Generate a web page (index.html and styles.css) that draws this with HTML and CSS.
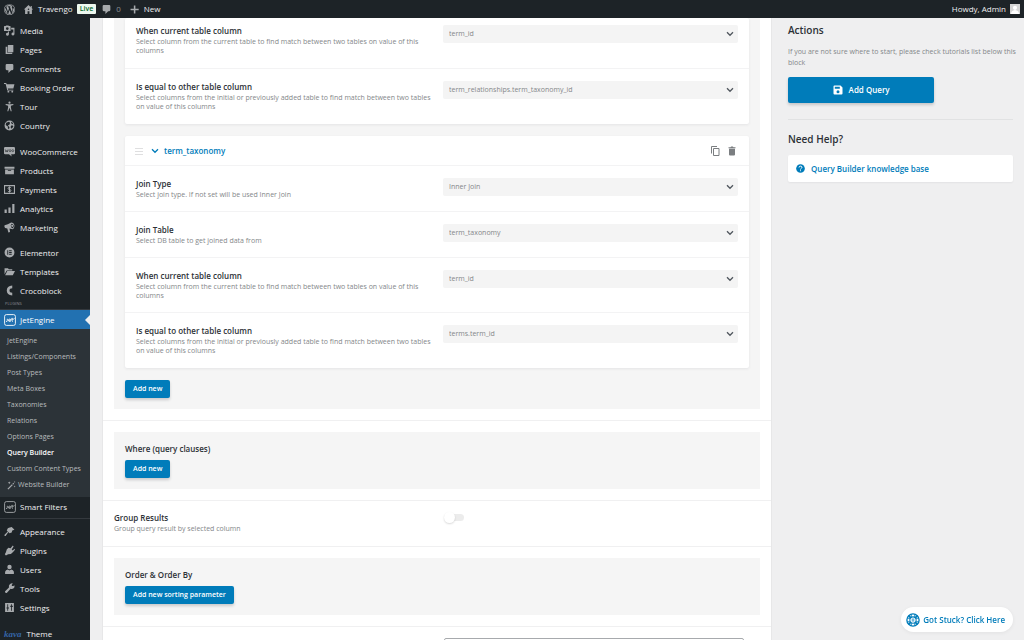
FILE: index.html
```html
<!DOCTYPE html>
<html lang="en">
<head>
<meta charset="utf-8">
<title>Query Builder</title>
<link rel="stylesheet" href="styles.css">
</head>
<body>
<svg class="sprite" aria-hidden="true">
  <symbol id="chevron" viewBox="0 0 10 10"><path d="M2 3.300 5 6.300 8 3.300" fill="none" stroke="currentColor" stroke-width="1.300"/></symbol>
  <symbol id="comment" viewBox="0 0 20 20"><path d="M5 2h10q2 0 2 2v7q0 2-2 2h-2l-5 5v-5H5q-2 0-2-2V4q0-2 2-2z"/></symbol>
  <symbol id="jet" viewBox="0 0 20 20"><rect x="1" y="1" width="18" height="18" rx="3" fill="none" stroke="currentColor" stroke-width="1.500"/><path d="M3.500 12.500q2 .5 2-1.500V8M7.500 10.500h4q0-2-2-2t-2 2 2 2h1.500M13.500 6.500v4.500q0 1.500 1.500 1.500M12 8.500h4.500l1-1" fill="none" stroke="currentColor" stroke-width="1.500"/></symbol>
</svg>
<header class="adminbar">
  <a class="bar-item" href="#" aria-label="About WordPress"><svg class="icon icon-bar" viewBox="0 0 20 20"><path fill-rule="evenodd" d="M10 0a10 10 0 1 1 0 20 10 10 0 0 1 0-20zm0 1a9 9 0 1 0 0 18 9 9 0 0 0 0-18z"/><path d="M2.700 6.700 6.700 17.500A8.200 8.200 0 0 1 2.700 6.700zM3.300 5.200A8.200 8.200 0 0 1 15.500 3.900c-1.200.2-1.700 1.300-1.200 2.400.8 1.500 1.500 2.500.8 4.700l-1 3.200-3.300-9.200 1-.2v-.6H6.500v.6l1.200.2 1.300 3.500-1.800 5.300L4.200 5l1-.2v-.6zM10.200 10.800l2.500 6.900q-2.500.9-5 .2zM17.200 6.200a8.200 8.200 0 0 1-3.100 10.900l2.500-7.200q.8-2 .6-3.700z"/></svg></a>
  <a class="bar-item" href="#"><svg class="icon icon-bar" viewBox="0 0 20 20"><path d="M10 2 1.500 10h2.300v8h4.500v-5h3.400v5h4.500v-8h2.300L16 7.600V3.500h-2v2.200zM10 8a1.400 1.400 0 1 1 0 2.800A1.400 1.400 0 0 1 10 8z"/></svg><span>Travengo</span><span class="live">Live</span></a>
  <a class="bar-item bar-count" href="#"><svg class="icon icon-bar"><use href="#comment"/></svg><span>0</span></a>
  <a class="bar-item" href="#"><svg class="icon icon-bar" viewBox="0 0 20 20"><path d="M8.800 2.500h2.800v6h6v2.800h-6v6H8.800v-6h-6V8.500h6z"/></svg><span>New</span></a>
  <a class="bar-item bar-user" href="#"><span>Howdy, Admin</span><svg class="avatar" viewBox="0 0 10 10"><rect width="10" height="10" fill="#d5d5d5"/><circle cx="5" cy="3.800" r="2.100" fill="#fff"/><path d="M1 10q0-3.500 4-4 4 .5 4 4z" fill="#fff"/></svg></a>
</header>
<div class="shell">
<nav class="sidebar" aria-label="Main menu">
  <ul class="menu">
    <li><a href="#"><svg class="icon" viewBox="0 0 20 20"><path fill-rule="evenodd" d="M3 2 4 1h4l1 1h2q1 0 1 1v7q0 1-1 1H1q-1 0-1-1V3q0-1 1-1zm3 2a2.500 2.500 0 1 0 0 5 2.500 2.500 0 0 0 0-5z"/><path d="M13 5h6v11.500a2.700 2.700 0 1 1-2-2.600V8h-4zM9 12v5a2.700 2.700 0 1 1-2-2.600V12z"/></svg>Media</a></li>
    <li><a href="#"><svg class="icon" viewBox="0 0 20 20"><path d="M7 2h10v13H7zM3 5h3v11h9v2H3z"/></svg>Pages</a></li>
    <li><a href="#"><svg class="icon"><use href="#comment"/></svg>Comments</a></li>
    <li><a href="#"><svg class="icon" viewBox="0 0 20 20"><path d="M0 2h4l1 2h14l-2 8H7l.4 2H17v1.500H6L3 3.800H0z"/><circle cx="8" cy="17.500" r="1.700"/><circle cx="15" cy="17.500" r="1.700"/></svg>Booking Order</a></li>
    <li><a href="#"><svg class="icon" viewBox="0 0 20 20"><circle cx="10" cy="3" r="2"/><path d="M3 5.500 8 6h4l5-.5v1.800L12.500 8.500V12L14 18.500h-1.800L10.500 13h-1l-1.700 5.500H6L7.500 12V8.500L3 7.300z"/></svg>Tour</a></li>
    <li><a href="#"><svg class="icon" viewBox="0 0 20 20"><path fill-rule="evenodd" d="M10 1a9 9 0 1 1 0 18 9 9 0 0 1 0-18zM4 5 3 9l4 3v3l2 2 1-4-3-3 3-2 1-3-2-2zm9-2 0 3 4 2-1-3zm0 7-1 3 2 3 3-4-1-2z"/></svg>Country</a></li>
  </ul>
  <ul class="menu menu-shop">
    <li><a href="#"><svg class="icon" viewBox="0 0 20 20"><path d="M2 2h16q2 0 2 2v9q0 2-2 2h-5l1 4-5-4H2q-2 0-2-2V4q0-2 2-2z"/><path d="m2 6 1.500 5L5 8l1 3 1.500-5" fill="none" stroke="#1d2327"/><circle cx="11" cy="8.500" r="1.800" fill="none" stroke="#1d2327"/><circle cx="16" cy="8.500" r="1.800" fill="none" stroke="#1d2327"/></svg>WooCommerce</a></li>
    <li><a href="#"><svg class="icon" viewBox="0 0 20 20"><path fill-rule="evenodd" d="M1 3h18v4H1zM2 8h16v9H2zm5 1.500V11h6V9.500z"/></svg>Products</a></li>
    <li><a href="#"><svg class="icon" viewBox="0 0 20 20"><path d="M1 3h18v14H1z" fill="none" stroke="currentColor" stroke-width="2"/><path d="M13 7.500q-.5-1.500-3-1.500T7.500 8t2.500 2 2.500 2T10 14t-3-1.500M10 4.500v11" fill="none" stroke="currentColor" stroke-width="1.800"/></svg>Payments</a></li>
    <li><a href="#"><svg class="icon" viewBox="0 0 20 20"><path d="M1 12h4v6H1zM8 8h4v10H8zM15 2h4v16h-4z"/></svg>Analytics</a></li>
    <li><a href="#"><svg class="icon" viewBox="0 0 20 20"><path fill-rule="evenodd" d="M1 6 7 4l6-3q5 0 6 6 0 5-3 6l-6-1 1 6-3 1-2-7-4-1q-2-2-1-5zm13-3q-3 2-1 6t4 1 0-5-3-2z"/><circle cx="15" cy="7" r="2"/></svg>Marketing</a></li>
  </ul>
  <ul class="menu menu-build">
    <li><a href="#"><svg class="icon" viewBox="0 0 20 20"><path fill-rule="evenodd" d="M10 1a9 9 0 1 1 0 18 9 9 0 0 1 0-18zM6 6v8h1.700V6zm3.300 0v1.700H14V6zm0 3.200v1.600H14V9.200zm0 3.100V14H14v-1.700z"/></svg>Elementor</a></li>
    <li><a href="#"><svg class="icon" viewBox="0 0 20 20"><path d="M1 15V4h6l2 2h6v2H5zM6 9h14l-4 8H2z"/></svg>Templates</a></li>
    <li><a href="#"><svg class="icon" viewBox="0 0 20 20"><path d="M15 1v5q-5 0-5 4t5 4v5q-10-1-10-9t10-9z"/></svg>Crocoblock</a></li>
  </ul>
  <div class="menu-label"><span>PLUGINS</span></div>
  <ul class="menu menu-jet">
    <li class="current"><a href="#"><svg class="icon icon-jet"><use href="#jet"/></svg>JetEngine</a>
      <ul class="submenu">
        <li><a href="#">JetEngine</a></li>
        <li><a href="#">Listings/Components</a></li>
        <li><a href="#">Post Types</a></li>
        <li><a href="#">Meta Boxes</a></li>
        <li><a href="#">Taxonomies</a></li>
        <li><a href="#">Relations</a></li>
        <li><a href="#">Options Pages</a></li>
        <li><a href="#" class="active" aria-current="page">Query Builder</a></li>
        <li><a href="#">Custom Content Types</a></li>
        <li><a href="#"><svg class="icon icon-wand" viewBox="0 0 20 20"><path d="m1 17 10-10 2 2L3 19zM12 6l2-2 2 2-2 2zM5 1l1 2 2 1-2 1-1 2-1-2-2-1 2-1zM17 10l.7 1.500 1.500.7-1.500.7-.7 1.500-.7-1.500-1.500-.7 1.500-.7zM17 0l.6 1.400L19 2l-1.400.6L17 4l-.6-1.400L15 2l1.400-.6z"/></svg>Website Builder</a></li>
      </ul>
    </li>
    <li><a href="#"><svg class="icon icon-jet"><use href="#jet"/></svg>Smart Filters</a></li>
  </ul>
  <ul class="menu menu-admin">
    <li><a href="#"><svg class="icon" viewBox="0 0 20 20"><path d="m9 3 5-1 5 5-4 1-1 4-4 1-2-2-5 7H1v-2l6-6-2-2 2-4z"/></svg>Appearance</a></li>
    <li><a href="#"><svg class="icon" viewBox="0 0 20 20"><path d="m12 6 4-5 1.500 1.500L14 8l2 2 3-3 1 1.500-3.500 4-4 4-5 .5-4 2-2-2 2-4L5 8l3-3z"/></svg>Plugins</a></li>
    <li><a href="#"><svg class="icon" viewBox="0 0 20 20"><circle cx="10" cy="5.500" r="4"/><path d="M2 18v-4q1-3 5-4l3 2 3-2q4 1 5 4v4z"/></svg>Users</a></li>
    <li><a href="#"><svg class="icon" viewBox="0 0 20 20"><path d="M17 5.500 19 4q1 4-2 6-2 1.500-5 .5L5 18q-2 1-3-1t1-3l6-6Q8 4 11 2t5-1l-2 2.500.5 2z"/></svg>Tools</a></li>
    <li><a href="#"><svg class="icon" viewBox="0 0 20 20"><path fill-rule="evenodd" d="M2 2h16v16H2zm4 2v6H4.500v2H6v4h1.500v-4H9v-2H7.500V4zm7 0v3h-1.500v2H13v7h1.500V9H16V7h-1.500V4z"/></svg>Settings</a></li>
  </ul>
  <ul class="menu menu-theme">
    <li><a href="#"><span class="kava" aria-hidden="true">kava</span>Theme</a></li>
  </ul>
</nav>
<main class="content">
  <div class="panel">
    <section class="section section-joins">
      <div class="box box-joins">
        <article class="card card-scrolled">
          <div class="field">
            <div class="field-text"><label class="title" for="a1">When current table column</label><p class="desc">Select column from the current table to find match between two tables on value of this columns</p></div>
            <div class="select"><select id="a1"><option>term_id</option></select><svg class="caret"><use href="#chevron"/></svg></div>
          </div>
          <div class="field">
            <div class="field-text"><label class="title" for="a2">Is equal to other table column</label><p class="desc">Select columns from the initial or previously added table to find match between two tables on value of this columns</p></div>
            <div class="select"><select id="a2"><option>term_relationships.term_taxonomy_id</option></select><svg class="caret"><use href="#chevron"/></svg></div>
          </div>
        </article>
        <article class="card">
          <header class="card-head">
            <svg class="grip" viewBox="0 0 8 8"><path d="M0 1.500h8M0 4.500h8M0 7.500h8" stroke="currentColor"/></svg>
            <button class="toggle" type="button"><svg class="caret-head"><use href="#chevron"/></svg>term_taxonomy</button>
            <button class="tool" type="button" aria-label="Copy"><svg viewBox="0 0 10 10"><path d="M1.500 7.500v-7H7M3.500 2.500h5.500v7H3.500z" fill="none" stroke="currentColor"/></svg></button>
            <button class="tool" type="button" aria-label="Delete"><svg viewBox="0 0 10 10"><path d="M1.500 1.200h2l.6-.7h1.800l.6.700h2v1h-7zM2 2.700h6v5.800q0 1-1 1H3q-1 0-1-1z" fill="currentColor"/></svg></button>
          </header>
          <div class="field">
            <div class="field-text"><label class="title" for="b1">Join Type</label><p class="desc">Select join type. If not set will be used Inner Join</p></div>
            <div class="select"><select id="b1"><option>Inner Join</option></select><svg class="caret"><use href="#chevron"/></svg></div>
          </div>
          <div class="field">
            <div class="field-text"><label class="title" for="b2">Join Table</label><p class="desc">Select DB table to get joined data from</p></div>
            <div class="select"><select id="b2"><option>term_taxonomy</option></select><svg class="caret"><use href="#chevron"/></svg></div>
          </div>
          <div class="field">
            <div class="field-text"><label class="title" for="b3">When current table column</label><p class="desc">Select column from the current table to find match between two tables on value of this columns</p></div>
            <div class="select"><select id="b3"><option>term_id</option></select><svg class="caret"><use href="#chevron"/></svg></div>
          </div>
          <div class="field">
            <div class="field-text"><label class="title" for="b4">Is equal to other table column</label><p class="desc">Select columns from the initial or previously added table to find match between two tables on value of this columns</p></div>
            <div class="select"><select id="b4"><option>terms.term_id</option></select><svg class="caret"><use href="#chevron"/></svg></div>
          </div>
        </article>
        <button class="btn" type="button">Add new</button>
      </div>
    </section>
    <section class="section">
      <div class="box"><h3 class="title box-title">Where (query clauses)</h3><button class="btn" type="button">Add new</button></div>
    </section>
    <section class="section setting">
      <div class="field-text"><label class="title" for="group">Group Results</label><p class="desc">Group query result by selected column</p></div>
      <div class="setting-control"><input class="switch" id="group" type="checkbox" role="switch"></div>
    </section>
    <section class="section">
      <div class="box"><h3 class="title box-title">Order &amp; Order By</h3><button class="btn" type="button">Add new sorting parameter</button></div>
    </section>
    <section class="section setting">
      <div class="field-text"></div>
      <div class="setting-control"><input class="text" type="text" aria-label="Limit"></div>
    </section>
  </div>
  <aside class="actions">
    <h2 class="heading">Actions</h2>
    <p class="note">If you are not sure where to start, please check tutorials list below this block</p>
    <button class="btn-primary" type="button"><svg class="save" viewBox="0 0 10 10"><path fill-rule="evenodd" d="M1.500.5h6l2 2v6q0 1-1 1h-7q-1 0-1-1v-7q0-1 1-1zM1.800 1.800v2h5v-2zM5 5.200a1.500 1.500 0 1 0 0 3 1.500 1.500 0 0 0 0-3z"/></svg>Add Query</button>
    <hr class="rule">
    <h2 class="heading">Need Help?</h2>
    <a class="help" href="#"><svg class="help-icon" viewBox="0 0 10 10"><circle cx="5" cy="5" r="4.800" fill="currentColor"/><path d="M3.400 3.900q0-1.500 1.600-1.500t1.600 1.300q0 .8-.8 1.200T5 6.100M5 7v1" fill="none" stroke="#fff" stroke-width="1.100"/></svg>Query Builder knowledge base</a>
  </aside>
</main>
</div>
<button class="stuck" type="button"><svg class="stuck-icon" viewBox="0 0 16 16"><circle cx="8" cy="8" r="7" fill="none" stroke="currentColor" stroke-width="1.500"/><circle cx="8" cy="8" r="3.600" fill="none" stroke="currentColor" stroke-width="1.200"/><path d="M6 1.500v3.200M10 1.500v3.200M6 11.300v3.200M10 11.300v3.200M1.500 6h3.200M1.500 10h3.200M11.300 6h3.200M11.300 10h3.200" stroke="currentColor"/><path d="M3 3l2.500 2.500M13 3l-2.500 2.500M3 13l2.500-2.500M13 13l-2.500-2.500" stroke="currentColor" stroke-width="2"/><path d="M6.500 7h3M6.500 9h3" stroke="currentColor"/></svg>Got Stuck? Click Here</button>
</body>
</html>
```
FILE: styles.css
```css
* { box-sizing: border-box; }
body {
  margin: 0;
  height: 100vh;
  display: flex;
  flex-direction: column;
  overflow: hidden;
  background: #efeff0;
  color: #2c3136;
  font: 8px/12px "Open Sans", "Noto Sans", sans-serif;
}
ul { list-style: none; margin: 0; padding: 0; }
p, h2, h3 { margin: 0; }
a { text-decoration: none; color: inherit; }
button, input, select { font: inherit; color: inherit; border: 0; margin: 0; }
button { cursor: pointer; }
svg { flex: none; }
.sprite { position: absolute; width: 0; height: 0; }
.icon { width: 11px; height: 11px; fill: currentColor; color: #a7aaad; }

.adminbar {
  flex: none;
  height: 18px;
  padding: 0 4px;
  display: flex;
  gap: 9px;
  background: #1d2327;
  color: #f0f0f1;
}
.bar-item { display: flex; align-items: center; gap: 4px; }
.bar-item + .bar-item { margin-left: -1px; }
.bar-item.bar-count { color: #8c8f94; margin-left: -4px; }
.bar-item.bar-user { margin-left: auto; }
.avatar { width: 10px; height: 10px; }
.live {
  padding: 0 3px;
  line-height: 10px;
  border-radius: 1px;
  background: #edf8ef;
  color: #0a6b2c;
  font-weight: 600;
  font-size: 7px;
}

.shell { flex: 1; min-height: 0; display: flex; overflow: hidden; }
.sidebar { width: 90px; flex: none; background: #1d2327; color: #f0f0f1; padding-top: 3px; }
.menu a { display: flex; align-items: center; gap: 5px; height: 19px; padding-left: 4px; white-space: nowrap; }
.menu-shop { margin-top: 7px; }
.menu-build { margin-top: 6px; }
.menu-label { height: 10px; padding: 0 5px; display: flex; border-bottom: 1px solid #34393e; }
.menu-label span { font-size: 4px; line-height: 8px; color: #8c8f94; }
.current > a { position: relative; background: #2271b1; color: #fff; }
.current > a::after {
  content: "";
  position: absolute;
  right: 0;
  top: 5px;
  border: 5px solid transparent;
  border-right-color: #efeff0;
  border-left-width: 0;
}
.icon-jet { width: 12px; height: 12px; }
.menu .icon-jet { margin-right: -1px; }
.current > a .icon { color: #fff; }
.submenu { background: #2c3338; padding: 4px 0; color: #b9bcbe; font-size: 7px; }
.menu .submenu a { height: 16px; padding-left: 7px; gap: 2px; }
.menu .submenu .active { color: #fff; font-weight: 600; }
.icon-wand { width: 9px; height: 9px; }
.menu-admin { margin-top: 2px; padding-top: 3px; border-top: 1px solid #34393e; }
.menu-theme { margin-top: 7px; }
.kava { color: #3565a8; font: italic bold 9px/12px "Liberation Serif", serif; }

.content { flex: 1; min-width: 0; padding-left: 13px; display: grid; grid-template-columns: minmax(0, 668fr) minmax(0, 253fr); align-items: start; }
.panel { background: #fff; box-shadow: 0 0 1px rgba(0, 0, 0, .2); }
.section { padding: 11px 11px; border-bottom: 1px solid #f0f0f1; }
.section-joins { padding-top: 0; }
.box { padding: 11px; background: #f5f5f5; }
.box-joins { padding-top: 0; }
.card { margin-bottom: 12px; background: #fff; border-radius: 2px; box-shadow: 0 1px 3px rgba(35, 40, 45, .08); }
.card-head { height: 30px; padding: 0 12px 0 10px; display: flex; align-items: center; gap: 7px; border-bottom: 1px solid #f3f3f4; }
.grip { width: 8px; height: 8px; color: #dfdfe0; }
.toggle { padding: 0; background: none; display: flex; align-items: center; gap: 4px; color: #007cba; font-weight: 600; margin-right: auto; }
.caret-head { width: 10px; height: 10px; }
.tool { padding: 0; width: 10px; height: 10px; background: none; color: #7b7e81; }
.tool svg { display: block; width: 10px; height: 10px; }
.field { padding: 12px 11px; display: grid; grid-template-columns: minmax(0, 307fr) minmax(0, 295fr); border-bottom: 1px solid #f3f3f4; }
.field:last-child { border-bottom-color: transparent; }
.card-scrolled .field:first-child { padding-top: 7px; padding-bottom: 13px; }
.field-text { padding-right: 12px; }
.title { display: block; font-size: 8px; font-weight: 600; line-height: 12px; }
.desc { color: #84878a; font-size: 7px; line-height: 9px; }
.select { position: relative; height: 18px; }
.select select { display: block; width: 100%; height: 18px; padding: 0 6px; appearance: none; background: #f4f4f4; border-radius: 2px; color: #84878a; font-size: 7px; }
.caret { position: absolute; right: 3px; top: 4px; width: 10px; height: 10px; color: #50575e; pointer-events: none; }
.btn { display: block; height: 18px; padding: 0 8px; background: #007cba; color: #fff; border-radius: 2px; font-size: 7px; font-weight: 600; box-shadow: 0 2px 3px rgba(35, 40, 45, .2); }
.box-title { margin-bottom: 5px; }
.setting { display: grid; grid-template-columns: minmax(0, 330fr) minmax(0, 316fr); padding-bottom: 13px; }
.setting-control { display: flex; align-items: start; }
.switch { display: flex; align-items: center; appearance: none; width: 20px; height: 7px; margin-top: 2px; border-radius: 4px; background: #ececec; }
.switch::before { content: ""; width: 11px; height: 11px; border-radius: 50%; background: #fff; box-shadow: 0 1px 2px rgba(0, 0, 0, .15); }
.text { width: 95%; height: 18px; border: 1px solid #a7aaad; border-radius: 2px; background: #fff; }

.actions { padding: 5px 11px 0 17px; }
.heading { font-size: 10px; line-height: 14px; font-weight: 600; }
.note { margin: 9px -10px 0 0; color: #84878a; font-size: 7px; line-height: 11px; }
.btn-primary { margin-top: 9px; width: 65%; height: 26px; display: flex; align-items: center; justify-content: center; gap: 6px; background: #007cba; color: #fff; border-radius: 2px; font-weight: 600; box-shadow: 0 2px 3px rgba(35, 40, 45, .2); }
.save { width: 10px; height: 10px; fill: #fff; }
.rule { margin: 16px 0 12px; border: 0; border-top: 1px solid #e1e2e3; }
.help { margin-top: 9px; height: 27px; padding: 0 8px; display: flex; align-items: center; gap: 6px; background: #fff; border-radius: 2px; color: #007cba; font-weight: 600; box-shadow: 0 1px 2px rgba(35, 40, 45, .06); }
.help-icon { width: 9px; height: 9px; }
.stuck { position: fixed; right: 11px; bottom: 8px; height: 25px; padding: 0 8px 0 5px; display: flex; align-items: center; gap: 3px; border-radius: 13px; background: #fff; color: #007cba; font-weight: 600; box-shadow: 0 1px 4px rgba(0, 0, 0, .06); }
.stuck-icon { width: 14px; height: 14px; }
```
